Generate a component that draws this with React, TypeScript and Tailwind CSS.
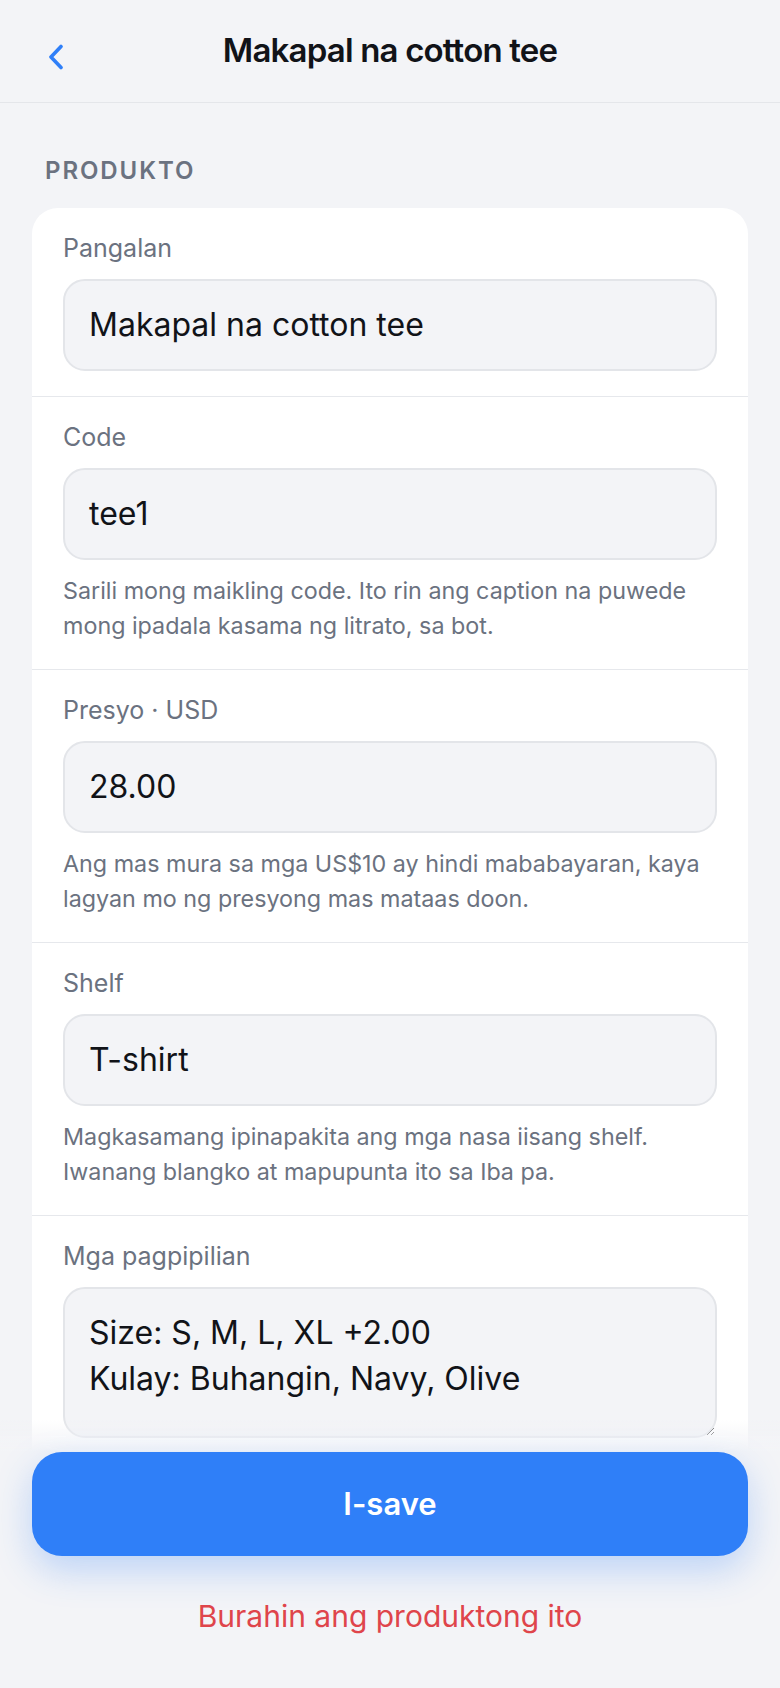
import React from "react";

const font = { fontFamily: "Inter, 'Noto Sans', 'Liberation Sans', sans-serif" };

function Help({ lines }: { lines: string[] }) {
  return (
    <div className="mt-[13px] text-[23.3px] leading-[35px] text-[#6b7280]">
      {lines.map((l) => (
        <div key={l} className="whitespace-nowrap">
          {l}
        </div>
      ))}
    </div>
  );
}

function Field({
  label,
  value,
  help,
  first,
}: {
  label: string;
  value: string;
  help?: string[];
  first?: boolean;
}) {
  return (
    <div
      className={`px-[31px] pt-[22px] ${help ? "pb-[26px]" : "pb-[25px]"} ${
        first ? "" : "border-t border-[#e6e8ec]"
      }`}
    >
      <div className="text-[25px] leading-[36px] text-[#6b7280]">{label}</div>
      <div className="mt-[13px] flex h-[92px] items-center rounded-[22px] border-2 border-[#e3e5e9] bg-[#f3f4f7] px-[24px] text-[32px] text-[#111318]">
        {value}
      </div>
      {help && <Help lines={help} />}
    </div>
  );
}

export default function App() {
  return (
    <div className="relative min-h-[1688px] bg-[#f3f4f7]" style={font}>
      <header className="relative flex h-[103px] items-center justify-center border-b border-[#e4e6ea]">
        <button className="absolute left-[46px] top-[44px]">
          <svg width="20" height="26" viewBox="0 0 20 26">
            <polyline
              points="15,2.5 5,13 15,23.5"
              fill="none"
              stroke="#2f7ff8"
              strokeWidth="3.6"
              strokeLinecap="round"
              strokeLinejoin="round"
            />
          </svg>
        </button>
        <h1 className="text-[33px] font-semibold tracking-[-0.025em] text-[#111318]">
          Makapal na cotton tee
        </h1>
      </header>

      <main className="pb-[320px]">
        <div className="px-[45px] pt-[52px] text-[24px] font-semibold leading-[32px] tracking-[0.08em] text-[#6b7280]">
          PRODUKTO
        </div>
        <div className="mx-[32px] mt-[21px] overflow-hidden rounded-[26px] bg-white">
          <Field first label="Pangalan" value="Makapal na cotton tee" />
          <Field
            label="Code"
            value="tee1"
            help={[
              "Sarili mong maikling code. Ito rin ang caption na puwede",
              "mong ipadala kasama ng litrato, sa bot.",
            ]}
          />
          <Field
            label="Presyo · USD"
            value="28.00"
            help={[
              "Ang mas mura sa mga US$10 ay hindi mababayaran, kaya",
              "lagyan mo ng presyong mas mataas doon.",
            ]}
          />
          <Field
            label="Shelf"
            value="T-shirt"
            help={[
              "Magkasamang ipinapakita ang mga nasa iisang shelf.",
              "Iwanang blangko at mapupunta ito sa Iba pa.",
            ]}
          />
          <div className="border-t border-[#e6e8ec] px-[31px] pt-[22px] pb-[40px]">
            <div className="text-[25px] leading-[36px] text-[#6b7280]">Mga pagpipilian</div>
            <textarea
              className="mt-[13px] block h-[151px] w-full rounded-[22px] border-2 border-[#e3e5e9] bg-[#f3f4f7] px-[24px] pt-[21px] text-[32px] leading-[46px] text-[#111318] outline-none"
              style={font}
              defaultValue={"Size: S, M, L, XL +2.00\nKulay: Buhangin, Navy, Olive"}
            />
          </div>
        </div>
      </main>

      <div className="fixed inset-x-0 bottom-0">
        <div className="h-[32px] bg-linear-to-b from-[#f3f4f7]/0 to-[#f3f4f7]" />
        <div className="bg-[#f3f4f7] px-[32px] pb-[52px]">
          <button className="flex h-[104px] w-full items-center justify-center rounded-[30px] bg-[#2f7ff8] text-[31px] font-semibold text-white shadow-[0_14px_36px_rgba(47,127,248,0.28)]">
            I-save
          </button>
          <div className="mt-[40px] text-center text-[30px] leading-[40px] text-[#df454b]">
            Burahin ang produktong ito
          </div>
        </div>
      </div>
    </div>
  );
}
